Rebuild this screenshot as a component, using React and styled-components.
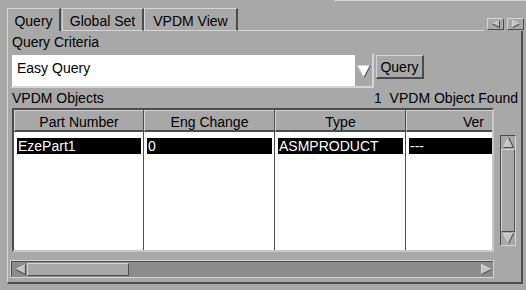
import React from 'react';
import styled, { createGlobalStyle } from 'styled-components';

const BG = '#a8a8a8';
const LIGHT = '#d4d4d4';
const DARK = '#4c4c4c';
const TROUGH = '#8c8c8c';

const GlobalStyle = createGlobalStyle`
  body {
    margin: 0;
    background: ${BG};
  }
`;

const Window = styled.div`
  width: 526px;
  height: 290px;
  overflow: hidden;
  background: ${BG};
  color: #000;
  font-family: "Liberation Sans", Arial, sans-serif;
  font-size: 14px;
  line-height: 16px;
  display: flex;
  flex-direction: column;
`;

const TopEdge = styled.div`
  height: 8px;
  display: flex;
  justify-content: flex-end;
  &::before {
    content: '';
    width: 192px;
    height: 1px;
    background: ${LIGHT};
  }
`;

const TabRow = styled.div`
  height: 23px;
  display: flex;
  align-items: flex-end;
  padding: 0 2px 0 7px;
`;

const Tab = styled.div`
  box-sizing: border-box;
  width: ${p => p.$w}px;
  height: 23px;
  margin-right: ${p => (p.$active ? 1 : 0)}px;
  padding-top: 4px;
  text-align: center;
  white-space: nowrap;
  border-top: 1px solid ${LIGHT};
  border-left: 1px solid ${LIGHT};
  border-right: 2px solid ${DARK};
  border-bottom: ${p => (p.$active ? 'none' : `1px solid ${LIGHT}`)};
`;

const TabFill = styled.div`
  flex: 1;
  height: 23px;
  box-sizing: border-box;
  border-bottom: 1px solid ${LIGHT};
`;

const TabArrows = styled.div`
  display: flex;
  gap: 3px;
  padding: 0 0 1px 3px;
  align-self: flex-end;
`;

const SmallButton = styled.div`
  box-sizing: border-box;
  width: 17px;
  height: 12px;
  display: flex;
  align-items: center;
  justify-content: center;
  background: ${BG};
  border-top: 1px solid ${LIGHT};
  border-left: 1px solid ${LIGHT};
  border-bottom: 1px solid ${DARK};
  border-right: 1px solid ${DARK};
`;

const Panel = styled.div`
  box-sizing: border-box;
  margin-left: 7px;
  width: 516px;
  height: 253px;
  padding: 0 3px 0 2px;
  border-left: 1px solid ${LIGHT};
  border-right: 2px solid ${DARK};
  border-bottom: 2px solid ${DARK};
  display: flex;
  flex-direction: column;
`;

const Label = styled.div`
  margin-top: ${p => p.$top || 0}px;
  padding-left: 2px;
  white-space: pre;
`;

const LabelRow = styled.div`
  margin-top: 2px;
  display: flex;
  justify-content: space-between;
  padding-left: 2px;
  white-space: pre;
`;

const ComboRow = styled.div`
  margin-top: 3px;
  height: 35px;
  display: flex;
  align-items: flex-start;
`;

const Combo = styled.div`
  box-sizing: border-box;
  width: 364px;
  height: 35px;
  display: flex;
  border-top: 2px solid ${BG};
  border-left: 2px solid ${BG};
  border-bottom: 2px solid ${LIGHT};
  border-right: 2px solid ${LIGHT};
`;

const ComboField = styled.div`
  flex: 1;
  background: #fff;
  padding: 5px 0 0 5px;
`;

const ComboArrow = styled.div`
  width: 17px;
  display: flex;
  align-items: center;
  justify-content: center;
  padding-top: 1px;
`;

const PushButton = styled.div`
  box-sizing: border-box;
  margin: 2px 0 0 2px;
  width: 48px;
  height: 24px;
  padding-top: 3px;
  text-align: center;
  border-top: 1px solid ${LIGHT};
  border-left: 1px solid ${LIGHT};
  border-bottom: 2px solid ${DARK};
  border-right: 2px solid ${DARK};
`;

const TableRow = styled.div`
  margin: 2px 0 0 2px;
  display: flex;
  align-items: flex-start;
`;

const Table = styled.div`
  box-sizing: border-box;
  width: 482px;
  height: 144px;
  display: flex;
  border-top: 2px solid ${DARK};
  border-left: 2px solid ${DARK};
  border-bottom: 2px solid #c8c8c8;
  border-right: 2px solid #c8c8c8;
`;

const Column = styled.div`
  box-sizing: border-box;
  width: ${p => p.$w}px;
  display: flex;
  flex-direction: column;
  border-right: ${p => (p.$last ? 'none' : `1px solid ${DARK}`)};
  background: #fff;
`;

const ColHeader = styled.div`
  box-sizing: border-box;
  height: 22px;
  padding: 3px ${p => (p.$align === 'right' ? 8 : 0)}px 0 0;
  text-align: ${p => p.$align || 'center'};
  background: ${BG};
  border-top: 1px solid ${LIGHT};
  border-left: 1px solid ${LIGHT};
  border-bottom: 2px solid ${DARK};
  white-space: nowrap;
  overflow: hidden;
`;

const ColBody = styled.div`
  flex: 1;
  padding: 6px ${p => (p.$last ? 0 : 2)}px 0 3px;
`;

const Cell = styled.div`
  height: 16px;
  padding-left: 1px;
  background: #000;
  color: #fff;
  white-space: nowrap;
  overflow: hidden;
`;

const VScroll = styled.div`
  box-sizing: border-box;
  margin: 27px 0 0 6px;
  width: 16px;
  height: 111px;
  display: flex;
  flex-direction: column;
  border-top: 1px solid ${DARK};
  border-left: 1px solid ${DARK};
  border-bottom: 1px solid ${LIGHT};
  border-right: 1px solid ${LIGHT};
`;

const ScrollEnd = styled.div`
  flex: none;
  width: ${p => p.$w || 14}px;
  height: ${p => p.$h || 12}px;
  display: flex;
  align-items: center;
  justify-content: center;
`;

const Thumb = styled.div`
  box-sizing: border-box;
  flex: ${p => (p.$w ? 'none' : 1)};
  width: ${p => (p.$w ? `${p.$w}px` : 'auto')};
  background: ${BG};
  border-top: 1px solid ${LIGHT};
  border-left: 1px solid ${LIGHT};
  border-bottom: 1px solid ${DARK};
  border-right: 1px solid ${DARK};
`;

const HScroll = styled.div`
  box-sizing: border-box;
  margin-top: 8px;
  width: 484px;
  height: 18px;
  border: 1px solid ${LIGHT};
`;

const HTrough = styled.div`
  box-sizing: border-box;
  height: 100%;
  display: flex;
  align-items: stretch;
  padding: 1px 0 1px 1px;
  background: ${TROUGH};
  border-top: 1px solid ${DARK};
  border-left: 1px solid ${DARK};
`;

const Spacer = styled.div`
  flex: 1;
`;

function Arrow({ dir, w = 10, h = 10, fill = '#c4c4c4' }) {
  const a = 0.5;
  const shapes = {
    up: { pts: [[w / 2, a], [w - a, h - a], [a, h - a]], dark: [[w / 2, a], [w - a, h - a], [a, h - a]] },
    down: { pts: [[a, a], [w - a, a], [w / 2, h - a]], dark: [[w - a, a], [w / 2, h - a]] },
    left: { pts: [[a, h / 2], [w - a, a], [w - a, h - a]], dark: [[w - a, a], [w - a, h - a], [a, h / 2]] },
    right: { pts: [[a, a], [w - a, h / 2], [a, h - a]], dark: [[w - a, h / 2], [a, h - a]] },
  }[dir];
  const str = list => list.map(p => p.join(',')).join(' ');
  return (
    <svg width={w} height={h} viewBox={`0 0 ${w} ${h}`}>
      <polygon points={str(shapes.pts)} fill={fill} stroke={LIGHT} strokeWidth="1" />
      <polyline points={str(shapes.dark)} fill="none" stroke={DARK} strokeWidth="1.2" />
    </svg>
  );
}

const columns = [
  { title: 'Part Number', w: 130, value: 'EzePart1' },
  { title: 'Eng Change', w: 131, value: '0' },
  { title: 'Type', w: 131, value: 'ASMPRODUCT' },
  { title: 'Ver', w: 86, value: '---', align: 'right', last: true },
];

export default function App() {
  return (
    <Window>
      <GlobalStyle />
      <TopEdge />
      <TabRow>
        <Tab $w={54} $active>Query</Tab>
        <Tab $w={82}>Global Set</Tab>
        <Tab $w={94}>VPDM View</Tab>
        <TabFill />
        <TabArrows>
          <SmallButton><Arrow dir="left" w={8} h={8} /></SmallButton>
          <SmallButton><Arrow dir="right" w={8} h={8} /></SmallButton>
        </TabArrows>
      </TabRow>
      <Panel>
        <Label $top={3}>Query Criteria</Label>
        <ComboRow>
          <Combo>
            <ComboField>Easy Query</ComboField>
            <ComboArrow><Arrow dir="down" w={14} h={13} fill="#fff" /></ComboArrow>
          </Combo>
          <PushButton>Query</PushButton>
        </ComboRow>
        <LabelRow>
          <span>VPDM Objects</span>
          <span>1  VPDM Object Found</span>
        </LabelRow>
        <TableRow>
          <Table>
            {columns.map(c => (
              <Column key={c.title} $w={c.w} $last={c.last}>
                <ColHeader $align={c.align}>{c.title}</ColHeader>
                <ColBody $last={c.last}>
                  <Cell>{c.value}</Cell>
                </ColBody>
              </Column>
            ))}
          </Table>
          <VScroll>
            <ScrollEnd $h={13}><Arrow dir="up" w={11} h={11} /></ScrollEnd>
            <Thumb />
            <ScrollEnd $h={13}><Arrow dir="down" w={11} h={11} /></ScrollEnd>
          </VScroll>
        </TableRow>
        <HScroll>
          <HTrough>
            <ScrollEnd $w={14} $h={12}><Arrow dir="left" w={11} h={11} /></ScrollEnd>
            <Thumb $w={102} />
            <Spacer />
            <ScrollEnd $w={13} $h={12}><Arrow dir="right" w={11} h={11} /></ScrollEnd>
          </HTrough>
        </HScroll>
      </Panel>
    </Window>
  );
}
